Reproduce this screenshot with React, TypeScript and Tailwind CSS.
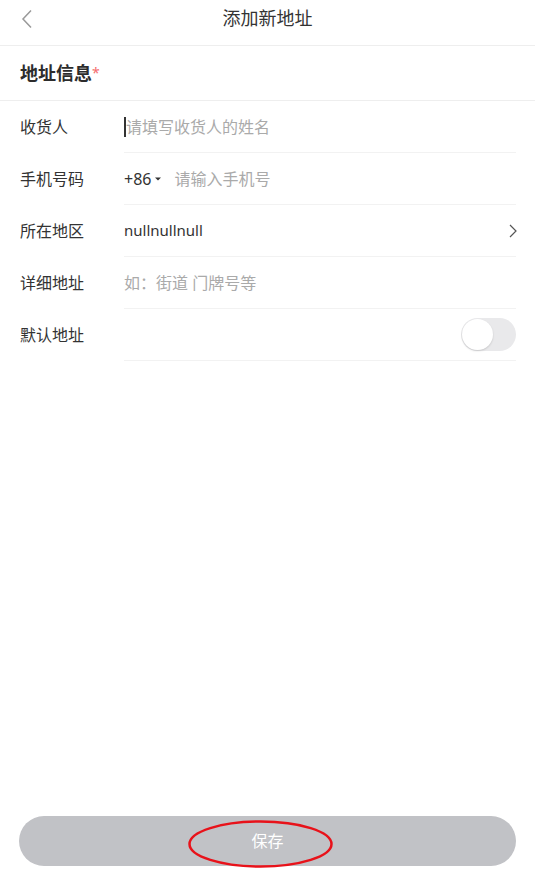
import React from "react";

const rows = [
  { label: "收货人", kind: "name" },
  { label: "手机号码", kind: "phone" },
  { label: "所在地区", kind: "region" },
  { label: "详细地址", kind: "detail" },
  { label: "默认地址", kind: "default" },
];

const App = () => {
  return (
    <div className="min-h-screen w-full bg-white flex flex-col font-['Noto_Sans','Noto_Sans_CJK_SC',sans-serif] text-[#333]">
      {/* header */}
      <div className="h-[46px] flex items-start pt-[8px] border-b border-[#eeeeee]">
        <div className="w-[60px] pl-[20px] pt-[1px] flex items-center">
          <svg width="14" height="20" viewBox="0 0 14 20" fill="none">
            <path d="M11 1.5 L3 10 L11 18.5" stroke="#999" strokeWidth="1.5" />
          </svg>
        </div>
        <div className="flex-1 text-center text-[18px] leading-[20px] text-[#333]">添加新地址</div>
        <div className="w-[60px]" />
      </div>

      {/* section title */}
      <div className="h-[55px] px-[20px] flex items-center border-b border-[#eeeeee]">
        <span className="text-[18px] font-bold text-[#2c2c2c]">地址信息</span>
        <span className="text-[14px] text-[#f56c6c] self-start mt-[16px]">*</span>
      </div>

      {/* form rows */}
      <div className="flex flex-col">
        {rows.map((row) => (
          <div key={row.label} className="flex pl-[20px]">
            <div className="w-[104px] h-[52px] flex items-center text-[16px] text-[#333]">{row.label}</div>
            <div className="flex-1 mr-[19px] h-[52px] flex items-center border-b border-[#f2f2f2]">
              {row.kind === "name" && (
                <div className="flex items-center">
                  <span className="w-[2px] h-[20px] bg-[#333]" />
                  <span className="text-[16px] text-[#aaaaaa]">请填写收货人的姓名</span>
                </div>
              )}
              {row.kind === "phone" && (
                <div className="flex items-center">
                  <span className="text-[16px] text-[#333]">+86</span>
                  <svg width="8" height="6" viewBox="0 0 8 6" className="ml-[3px]">
                    <path d="M1 1.5 L4 4.5 L7 1.5 Z" fill="#333" />
                  </svg>
                  <span className="ml-[12px] text-[16px] text-[#aaaaaa]">请输入手机号</span>
                </div>
              )}
              {row.kind === "region" && (
                <div className="flex-1 flex items-center justify-between">
                  <span className="text-[15px] text-[#333]">nullnullnull</span>
                  <svg width="8" height="14" viewBox="0 0 8 14" fill="none" className="mr-[-1px]">
                    <path d="M1 1 L7 7 L1 13" stroke="#555" strokeWidth="1.2" />
                  </svg>
                </div>
              )}
              {row.kind === "detail" && (
                <span className="text-[16px] text-[#aaaaaa]">如：街道 门牌号等</span>
              )}
              {row.kind === "default" && (
                <div className="flex-1 flex justify-end">
                  <div className="w-[55px] h-[33px] rounded-full bg-[#e9e9eb] p-[1px] flex items-center">
                    <div className="w-[31px] h-[31px] rounded-full bg-white shadow-[0_1px_2px_rgba(0,0,0,0.15)]" />
                  </div>
                </div>
              )}
            </div>
          </div>
        ))}
      </div>

      <div className="flex-1" />

      {/* save button */}
      <div className="px-[19px] pb-[22px]">
        <button className="relative w-full h-[50px] rounded-full bg-[#c1c2c6] text-white text-[16px] flex items-center justify-center">
          保存
          <svg
            className="absolute left-[168px] top-[4px]"
            width="147"
            height="48"
            viewBox="0 0 147 48"
            fill="none"
          >
            <ellipse cx="73.5" cy="24" rx="71" ry="22.5" stroke="#e8121a" strokeWidth="2.5" />
          </svg>
        </button>
      </div>
    </div>
  );
};

export default App;
